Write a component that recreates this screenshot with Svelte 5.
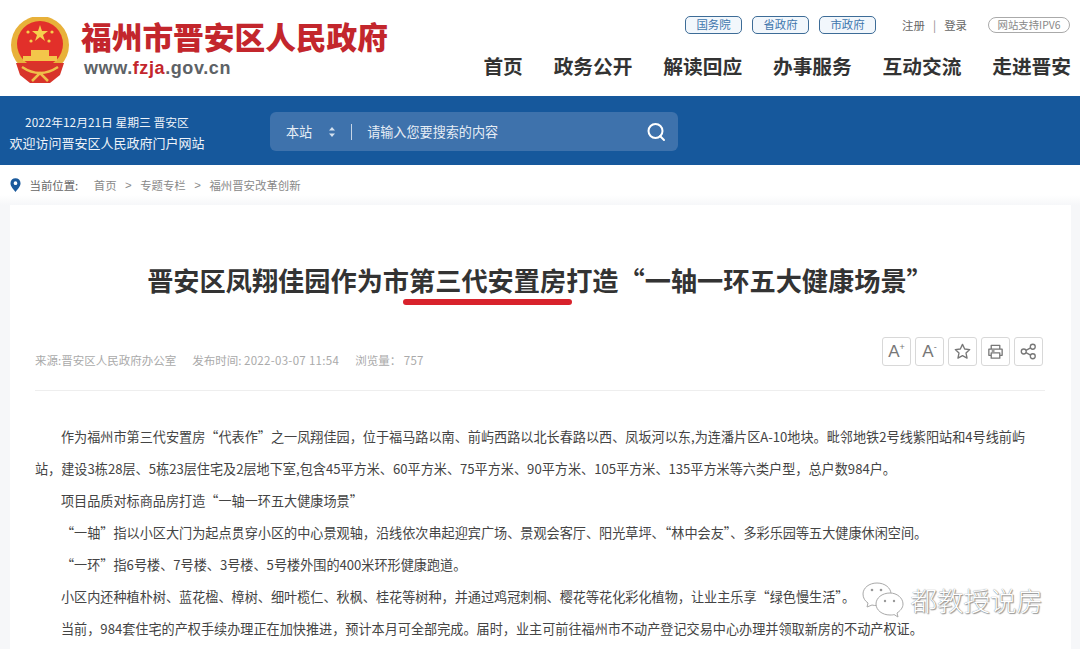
<script>
  const topLinks = ["国务院", "省政府", "市政府"];
  const nav = ["首页", "政务公开", "解读回应", "办事服务", "互动交流", "走进晋安"];
  const crumbs = ["首页", "专题专栏", "福州晋安改革创新"];
  const paragraphs = [
    "作为福州市第三代安置房“代表作”之一凤翔佳园，位于福马路以南、前屿西路以北长春路以西、凤坂河以东,为连潘片区A-10地块。毗邻地铁2号线紫阳站和4号线前屿站，建设3栋28层、5栋23层住宅及2层地下室,包含45平方米、60平方米、75平方米、90平方米、105平方米、135平方米等六类户型，总户数984户。",
    "项目品质对标商品房打造“一轴一环五大健康场景”",
    "“一轴”指以小区大门为起点贯穿小区的中心景观轴，沿线依次串起迎宾广场、景观会客厅、阳光草坪、“林中会友”、多彩乐园等五大健康休闲空间。",
    "“一环”指6号楼、7号楼、3号楼、5号楼外围的400米环形健康跑道。",
    "小区内还种植朴树、蓝花楹、樟树、细叶榄仁、秋枫、桂花等树种，并通过鸡冠刺桐、樱花等花化彩化植物，让业主乐享“绿色慢生活”。",
    "当前，984套住宅的产权手续办理正在加快推进，预计本月可全部完成。届时，业主可前往福州市不动产登记交易中心办理并领取新房的不动产权证。",
  ];
</script>

<div class="page">
  <header class="top">
    <div class="brand">
      <svg class="emblem" viewBox="0 0 60 66" aria-hidden="true">
        <circle cx="30" cy="28" r="29" fill="#e8b13a" />
        <circle cx="30" cy="27" r="23" fill="#e2302a" />
        <polygon points="30,8 32,14 38,14 33,18 35,24 30,20 25,24 27,18 22,14 28,14" fill="#f6cf4e" />
        <circle cx="18" cy="15" r="1.6" fill="#f6cf4e" />
        <circle cx="42" cy="15" r="1.6" fill="#f6cf4e" />
        <circle cx="21" cy="24" r="1.6" fill="#f6cf4e" />
        <circle cx="39" cy="24" r="1.6" fill="#f6cf4e" />
        <rect x="21" y="33" width="18" height="6" fill="#f3c64a" />
        <rect x="13" y="39" width="34" height="5" fill="#f3c64a" />
        <path d="M6 46 L54 46 L50 58 L40 66 L20 66 L10 58 Z" fill="#d8342a" />
        <path d="M12 50 Q30 62 48 50 M22 64 L30 56 L38 64" fill="none" stroke="#efc04a" stroke-width="2.5" />
      </svg>
      <div class="brand-text">
        <div class="brand-name">福州市晋安区人民政府</div>
        <div class="brand-url">www.<span>fzja</span>.gov.cn</div>
      </div>
    </div>
    <div class="top-right">
      <div class="utility">
        <div class="pills">
          {#each topLinks as link}
            <a class="pill">{link}</a>
          {/each}
        </div>
        <div class="login"><span>注册</span><i>|</i><span>登录</span></div>
        <div class="ipv6">网站支持IPV6</div>
      </div>
      <nav class="nav">
        {#each nav as item}
          <a>{item}</a>
        {/each}
      </nav>
    </div>
  </header>

  <section class="band">
    <div class="welcome">
      <div>2022年12月21日 星期三 晋安区</div>
      <div class="welcome-2">欢迎访问晋安区人民政府门户网站</div>
    </div>
    <div class="search">
      <span class="scope">本站</span>
      <svg class="updown" viewBox="0 0 8 12" aria-hidden="true">
        <path d="M4 1 L7 4.5 H1 Z M4 11 L7 7.5 H1 Z" fill="#d5e1ee" />
      </svg>
      <span class="sep"></span>
      <span class="placeholder">请输入您要搜索的内容</span>
      <svg class="glass" viewBox="0 0 20 20" aria-hidden="true">
        <circle cx="9.5" cy="9" r="7" fill="none" stroke="#fff" stroke-width="2" />
        <path d="M14 14 L18 18" stroke="#fff" stroke-width="2" stroke-linecap="round" />
      </svg>
    </div>
  </section>

  <div class="crumbs">
    <svg class="pin" viewBox="0 0 12 15" aria-hidden="true">
      <path fill-rule="evenodd" d="M6 0 A5.500 5.500 0 0 1 11.500 5.500 C11.500 9 8 12.500 6 15 C4 12.500 .5 9 .5 5.500 A5.500 5.500 0 0 1 6 0 Z M6 3.500 A2 2 0 1 0 6 7.500 A2 2 0 1 0 6 3.500 Z" fill="#1b5a9c" />
    </svg>
    <span class="here">当前位置:</span>
    {#each crumbs as crumb, i}
      {#if i > 0}<span class="gt">&gt;</span>{/if}
      <span>{crumb}</span>
    {/each}
  </div>

  <main class="card">
    <h1 class="title">
      晋安区凤翔佳园作为市第三代安置房打造“一轴一环五大健康场景”
      <span class="mark"></span>
    </h1>

    <div class="meta">
      <div class="meta-info">
        <span>来源:晋安区人民政府办公室</span>
        <span>发布时间: <b>2022-03-07 11:54</b></span>
        <span>浏览量： <b>757</b></span>
      </div>
      <div class="tools">
        <button class="tool font">A<sup>+</sup></button>
        <button class="tool font">A<sup>-</sup></button>
        <button class="tool" aria-label="收藏">
          <svg viewBox="0 0 20 20"><path d="M10 2.500 L12.300 7.400 L17.600 8 L13.700 11.600 L14.800 17 L10 14.300 L5.200 17 L6.300 11.600 L2.400 8 L7.700 7.400 Z" fill="none" stroke="#777" stroke-width="1.400" stroke-linejoin="round" /></svg>
        </button>
        <button class="tool" aria-label="打印">
          <svg viewBox="0 0 20 20"><path d="M5.500 7 V3.500 H14.500 V7 M5.500 14 H3 V7.500 H17 V14 H14.500 M5.500 11.500 H14.500 V17 H5.500 Z M6 9.500 H9" fill="none" stroke="#777" stroke-width="1.400" stroke-linejoin="round" /></svg>
        </button>
        <button class="tool" aria-label="分享">
          <svg viewBox="0 0 20 20"><g fill="none" stroke="#777" stroke-width="1.400"><circle cx="5" cy="10" r="2.600" /><circle cx="14.500" cy="5" r="2.600" /><circle cx="14.500" cy="15" r="2.600" /><path d="M7.300 8.800 L12.200 6.200 M7.300 11.200 L12.200 13.800" /></g></svg>
        </button>
      </div>
    </div>

    <article class="body">
      {#each paragraphs as p}
        <p>{p}</p>
      {/each}
    </article>

    <div class="watermark">
      <svg class="wechat" viewBox="0 0 44 38" aria-hidden="true">
        <g fill="#fff" stroke="#a9a9a9" stroke-width="1">
          <path d="M16 2 C8 2 2 7 2 13 C2 17 4 20 7 22 L6 26 L11 24 C12.500 24.500 14 24.500 16 24.500 C24 24.500 30 19 30 13 C30 7 24 2 16 2 Z" />
          <path d="M29 12 C21 12 15 17 15 23 C15 29 21 34 29 34 C31 34 32 34 33 33.500 L37 36 L36 32 C39 30 42 27 42 23 C42 17 36 12 29 12 Z" />
        </g>
        <g fill="#999"><circle cx="11" cy="9" r="1.300" /><circle cx="20" cy="9" r="1.300" /><circle cx="24" cy="20" r="1.200" /><circle cx="33" cy="20" r="1.200" /></g>
      </svg>
      <span>都教授说房</span>
    </div>
  </main>
</div>

<style>
  :global(body) {
    margin: 0;
    background: #f6f7f9;
  }
  .page {
    height: 649px;
    overflow: hidden;
    font-family: "Noto Sans CJK SC", "Liberation Sans", sans-serif;
    color: #444;
  }

  .top {
    height: 96px;
    background: #fff;
    display: flex;
    justify-content: space-between;
    padding: 0 9px 0 10px;
    box-sizing: border-box;
  }
  .brand {
    display: flex;
    gap: 11px;
    padding-top: 16px;
  }
  .emblem {
    width: 60px;
    height: 66px;
    margin-top: 1px;
  }
  .brand-name {
    font-size: 30.700px;
    line-height: 40px;
    font-weight: 900;
    color: #c3262c;
    white-space: nowrap;
  }
  .brand-url {
    margin-top: 1px;
    font-family: "Liberation Sans", sans-serif;
    font-weight: 700;
    font-size: 18px;
    line-height: 22px;
    letter-spacing: 0.600px;
    color: #5d6266;
    padding-left: 3px;
  }
  .brand-url span {
    color: #c3262c;
  }

  .top-right {
    display: flex;
    flex-direction: column;
    align-items: flex-end;
  }
  .utility {
    display: flex;
    align-items: center;
    height: 18px;
    margin-top: 16px;
    font-size: 11.400px;
    color: #666;
    padding-right: 1px;
  }
  .pills {
    display: flex;
    gap: 10px;
  }
  .pill {
    width: 57px;
    height: 18px;
    box-sizing: border-box;
    border: 1px solid #3d6c97;
    border-radius: 5px;
    background: #f2f7fc;
    color: #3f76ad;
    text-align: center;
    line-height: 15px;
  }
  .login {
    margin-left: 26px;
    width: 65px;
    display: flex;
    justify-content: space-between;
  }
  .login i {
    font-style: normal;
    color: #888;
  }
  .ipv6 {
    margin-left: 21px;
    width: 82px;
    height: 16px;
    box-sizing: border-box;
    border: 1px solid #aaa;
    border-radius: 9px;
    font-size: 10.400px;
    line-height: 13px;
    color: #888;
    text-align: center;
  }
  .nav {
    display: flex;
    gap: 30.900px;
    margin-top: 18px;
    font-size: 19.700px;
    line-height: 28px;
    font-weight: 700;
    color: #333;
  }

  .band {
    height: 69px;
    background: #16589c;
    display: flex;
    align-items: center;
    padding-left: 9px;
    padding-top: 2px;
    box-sizing: border-box;
    color: #eef3f9;
  }
  .welcome {
    width: 196px;
    text-align: center;
    font-size: 11.800px;
    line-height: 21px;
    white-space: nowrap;
  }
  .welcome-2 {
    font-size: 13px;
  }
  .search {
    margin-left: 65px;
    width: 408px;
    height: 39px;
    background: #3e72ac;
    border-radius: 6px;
    display: flex;
    align-items: center;
    padding: 0 12px 0 16px;
    box-sizing: border-box;
    font-size: 13.100px;
    color: #e6edf5;
  }
  .updown {
    width: 8px;
    height: 12px;
    margin-left: 16px;
  }
  .sep {
    width: 1px;
    height: 16px;
    background: #c6d5e6;
    margin-left: 15px;
  }
  .placeholder {
    margin-left: 15px;
    flex: 1;
  }
  .glass {
    width: 20px;
    height: 20px;
  }

  .crumbs {
    height: 40px;
    display: flex;
    align-items: center;
    gap: 8.500px;
    padding-left: 10px;
    box-sizing: border-box;
    background: linear-gradient(#fff 75%, #f6f7f9);
    font-size: 11.400px;
    color: #888;
  }
  .pin {
    width: 11px;
    height: 14px;
  }
  .here {
    margin-right: 7px;
    color: #666;
    font-size: 11.400px;
  }
  .gt {
    font-family: "Liberation Sans", sans-serif;
    color: #888;
  }

  .card {
    position: relative;
    margin: 0 9px 0 10px;
    height: 444px;
    background: #fff;
    padding: 0 26px 0 25px;
    box-sizing: border-box;
  }
  .title {
    margin: 0;
    padding-top: 57px;
    position: relative;
    text-align: center;
    font-size: 26.200px;
    line-height: 36px;
    font-weight: 700;
    color: #333;
    white-space: nowrap;
  }
  .mark {
    position: absolute;
    left: 368px;
    top: 94px;
    width: 169px;
    height: 6px;
    border-radius: 3px;
    background: #d8222c;
  }
  .meta {
    margin-top: 39px;
    height: 54px;
    display: flex;
    justify-content: space-between;
    border-bottom: 1px solid #eeeeee;
    box-sizing: border-box;
  }
  .meta-info {
    display: flex;
    gap: 16px;
    align-items: center;
    height: 46px;
    font-size: 11.500px;
    color: #aaa;
  }
  .meta-info b {
    font-weight: 400;
    letter-spacing: 0.300px;
  }
  .tools {
    display: flex;
    gap: 4px;
    padding-right: 2px;
  }
  .tool {
    width: 29px;
    height: 29px;
    padding: 0;
    background: #fff;
    border: 1px solid #d8d8d8;
    border-radius: 3px;
    display: flex;
    align-items: center;
    justify-content: center;
    color: #777;
    font-family: "Liberation Sans", sans-serif;
    font-size: 17px;
  }
  .tool svg {
    width: 19px;
    height: 19px;
  }
  .tool sup {
    font-size: 9px;
    line-height: 1;
    margin-top: -8px;
  }
  .body {
    padding-top: 30px;
    font-size: 13.130px;
    line-height: 32px;
    color: #444;
  }
  .body p {
    margin: 0;
    text-indent: 26px;
  }
  .watermark {
    position: absolute;
    right: 28px;
    bottom: 30px;
    display: flex;
    align-items: center;
    gap: 6px;
    font-size: 26.500px;
    font-weight: 300;
    color: #fff;
    text-shadow: 0 0 1px #666, 1px 1px 1px #999;
  }
  .wechat {
    width: 44px;
    height: 38px;
  }
</style>
